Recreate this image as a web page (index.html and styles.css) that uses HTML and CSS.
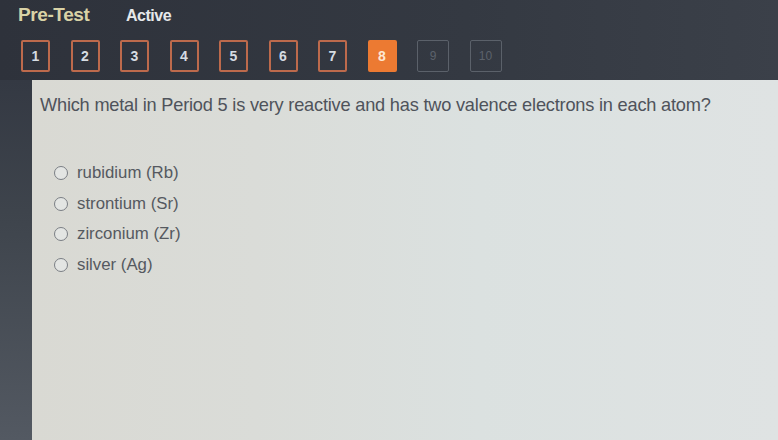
FILE: index.html
```html
<!DOCTYPE html>
<html>
<head>
<meta charset="utf-8">
<link rel="stylesheet" href="styles.css">
</head>
<body>
<div class="page">
  <header class="top">
    <div class="titles">
      <span class="title">Pre-Test</span>
      <span class="status">Active</span>
    </div>
    <nav class="nums">
      <span class="num">1</span>
      <span class="num">2</span>
      <span class="num">3</span>
      <span class="num">4</span>
      <span class="num">5</span>
      <span class="num">6</span>
      <span class="num">7</span>
      <span class="num current">8</span>
      <span class="num locked">9</span>
      <span class="num locked">10</span>
    </nav>
  </header>
  <main class="main">
    <div class="rail"></div>
    <section class="card">
      <p class="question">Which metal in Period 5 is very reactive and has two valence electrons in each atom?</p>
      <ul class="options">
        <li class="option"><span class="radio"></span>rubidium (Rb)</li>
        <li class="option"><span class="radio"></span>strontium (Sr)</li>
        <li class="option"><span class="radio"></span>zirconium (Zr)</li>
        <li class="option"><span class="radio"></span>silver (Ag)</li>
      </ul>
    </section>
  </main>
</div>
</body>
</html>
```
FILE: styles.css
```css
* { box-sizing: border-box; }
html, body { margin: 0; padding: 0; }
body {
  width: 778px;
  height: 440px;
  overflow: hidden;
  background: #30353e;
  font-family: "Liberation Sans", Arial, sans-serif;
}
.page { display: flex; flex-direction: column; height: 440px; }
.top {
  background: linear-gradient(90deg, #2e323b 0%, #343942 60%, #3b4049 100%);
  padding: 4px 0 0 18px;
  height: 80px;
}
.titles { display: flex; align-items: baseline; height: 22px; }
.title { color: #d9d2a6; font-weight: bold; font-size: 19px; letter-spacing: -0.4px; width: 108px; }
.status { color: #e6e8ea; font-weight: bold; font-size: 16px; letter-spacing: -0.5px; }
.nums { display: flex; gap: 20.5px; margin-top: 14px; margin-left: 3px; }
.num {
  width: 29px; height: 32px;
  border: 2px solid #bd6a4c;
  border-radius: 2px;
  display: flex; align-items: center; justify-content: center;
  color: #d6dce2; font-weight: bold; font-size: 14px;
}
.num.current { background: #ec7a32; border-color: #ec7a32; color: #fde7d2; }
.num.locked { border: 1.5px solid #5b616a; color: #5c626b; font-weight: normal; font-size: 12px; width: 32px; }
.main { flex: 1; display: flex; }
.rail { width: 32px; background: linear-gradient(180deg, #343943 0%, #3f454d 40%, #535962 100%); }
.card {
  flex: 1;
  background: linear-gradient(90deg, #d9d9d3 0%, #dadcd8 30%, #dbe1e0 60%, #dfe3e3 100%);
  padding: 15px 0 0 8px;
}
.question {
  margin: 0;
  color: #4f535b;
  font-size: 18.2px;
  letter-spacing: -0.2px;
}
.options { list-style: none; margin: 42px 0 0 0; padding: 0 0 0 14px; }
.option {
  display: flex; align-items: center;
  height: 30.5px;
  color: #555960;
  font-size: 16.8px;
}
.radio {
  width: 14px; height: 14px;
  border: 1.5px solid #7a7e84;
  border-radius: 50%;
  margin-right: 9px;
  background: #e3e5e3;
}
```
